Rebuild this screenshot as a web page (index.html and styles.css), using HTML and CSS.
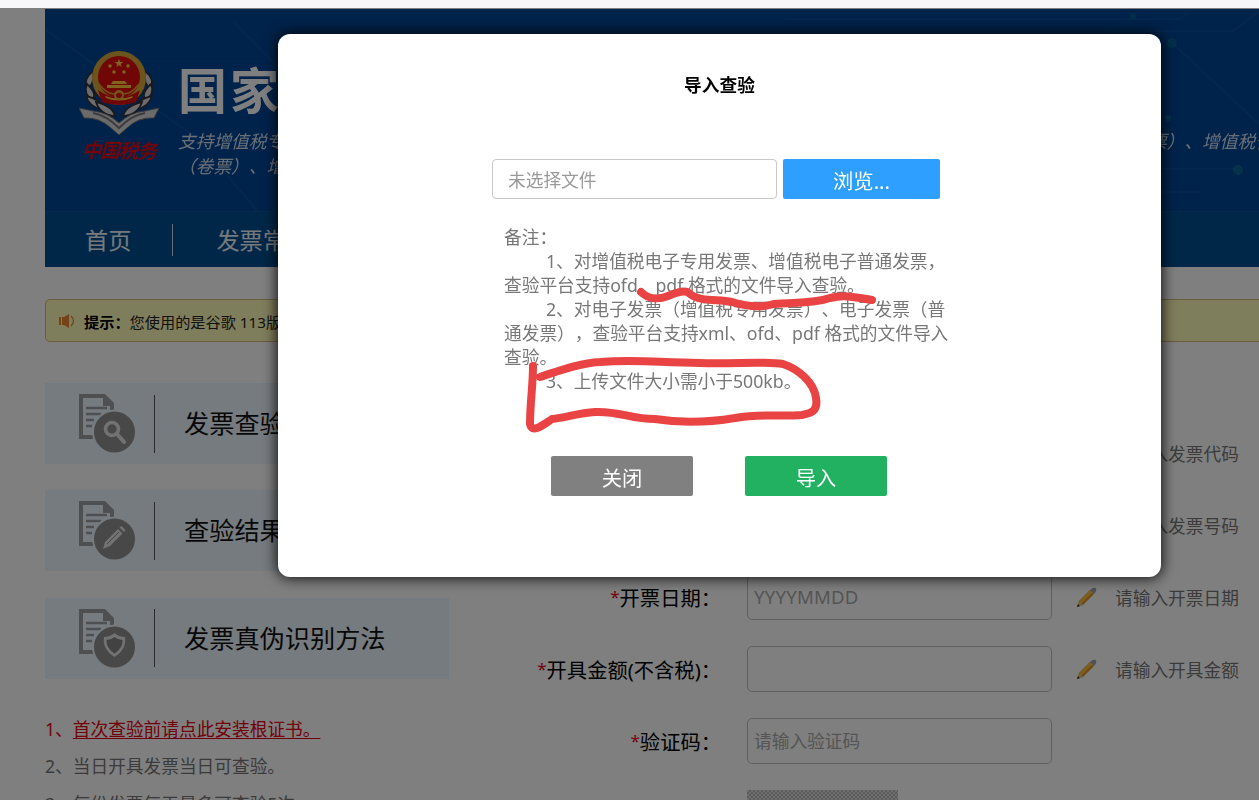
FILE: index.html
```html
<!DOCTYPE html>
<html lang="zh-CN">
<head>
<meta charset="UTF-8" />
<meta name="viewport" content="width=device-width, initial-scale=1.0" />
<title>国家税务总局全国增值税发票查验平台</title>
<link rel="stylesheet" href="styles.css">
</head>
<body>
<div class="topbar"></div>

<div class="page">
  <header class="header">
    <svg class="circuit" width="1214" height="258" viewBox="0 0 1214 258">
      <g fill="none" stroke="#1a5fae" stroke-width="2" opacity=".35">
        <path d="M0 20 L150 128 L215 205" />
        <path d="M35 52 H232" opacity=".5" />
        <path d="M188 12 L240 65" />
        <path d="M740 10 H1135 L1142 4" />
        <path d="M1060 22 H1188 L1214 2" />
        <path d="M1123 30 L1214 115" />
        <path d="M1115 160 H1190 M1115 183 H1155" />
      </g>
      <g fill="#158391">
        <circle cx="1127" cy="34" r="5" opacity=".4" />
        <circle cx="1193" cy="161" r="5" opacity=".5" />
        <circle cx="1123" cy="109" r="3" opacity=".5" />
        <circle cx="1088" cy="7" r="3" opacity=".4" />
      </g>
    </svg>
    <div class="banner">
      <div class="logo">
        <svg width="82" height="86" viewBox="0 0 82 86">
          <!-- 麦穗 -->
          <g fill="#d9d9dd" stroke="#33333b" stroke-width="1.8">
            <path d="M14 21 Q4 29 8 38 Q16 35 14 21Z" />
            <path d="M66 21 Q76 29 72 38 Q64 35 66 21Z" />
            <path d="M8 34 Q4 44 13 50 Q19 44 8 34Z" />
            <path d="M72 34 Q76 44 67 50 Q61 44 72 34Z" />
            <path d="M7 46 Q10 57 22 59 Q24 50 7 46Z" />
            <path d="M73 46 Q70 57 58 59 Q56 50 73 46Z" />
            <path d="M17 52 Q21 65 36 66 Q34 56 17 52Z" />
            <path d="M63 52 Q59 65 44 66 Q46 56 63 52Z" />
            <path d="M12 38 L27 54 M68 38 L53 54" />
          </g>
          <ellipse cx="40" cy="28" rx="27" ry="27" fill="#d8a83a" />
          <circle cx="40" cy="27" r="21" fill="#e00c0c" />
          <path d="M19 40 Q40 55 61 40 L57 52 Q40 58 23 52Z" fill="#e00c0c" />
          <g fill="#ffc83c">
            <path d="M40 9 l1.2 3 3.2 0 -2.6 2 1 3.1 -2.8-1.9 -2.8 1.9 1-3.1 -2.6-2 3.2 0Z" />
            <circle cx="31" cy="16" r="1.7" /><circle cx="49" cy="16" r="1.7" />
            <circle cx="35" cy="22" r="1.7" /><circle cx="45" cy="22" r="1.7" />
            <path d="M34 31 H46 L48 34 H32Z M28 35 H52 V38 H28Z" />
            <path d="M26 46 Q40 51 54 46 L53 48 Q40 53 27 48Z" />
          </g>
          <circle cx="40" cy="45" r="4" fill="none" stroke="#e5ac35" stroke-width="2" />
          <path d="M20 34 Q31 48 40 42 Q49 48 60 34" fill="none" stroke="#e0a530" stroke-width="1.5" />
          <!-- 绶带 -->
          <path d="M0 58 L14 61 Q28 62 40 73 Q52 62 66 61 L80 58 L75 68 Q59 67 48 78 L40 85 L32 78 Q20 67 5 68Z" fill="#d6d6d9" stroke="#717179" />
          <path d="M14 63 Q27 65 40 78 Q53 65 66 63" fill="none" stroke="#777780" stroke-width="2" />
        </svg>
        <div class="logo-text">中国税务</div>
      </div>
      <div class="intro">
        <h1>国家税务</h1>
        <div class="desc"><span class="desc-main">支持增值税专用发票</span><span>票）、增值税普</span></div>
        <div class="desc">（卷票）、增值税</div>
      </div>
    </div>
    <nav class="nav">
      <a>首页</a>
      <i></i>
      <a>发票常见问题</a>
    </nav>
  </header>

  <div class="tip">
    <svg width="18" height="16" viewBox="0 0 18 16" fill="#e8892c">
      <path d="M1 4 H3 V12 H1Z M4 4 H6 L11 1 V15 L6 12 H4Z" />
      <path d="M13 3 Q18 8 13 13" fill="none" stroke="#e8892c" stroke-width="1.3" />
    </svg>
    <b>提示：</b><span>您使用的是谷歌 113版本浏览器</span>
  </div>

  <div class="main">
    <div class="side">
      <div class="card">
        <svg class="card-icon" width="58" height="62" viewBox="0 0 58 62">
          <use href="#doc" />
          <circle cx="33" cy="38" r="6.500" fill="none" stroke="#e4e4e4" stroke-width="3.600" />
          <path d="M38 43 L45 51" stroke="#e4e4e4" stroke-width="4" stroke-linecap="round" />
        </svg>
        <i></i><span>发票查验说明</span>
      </div>
      <div class="card">
        <svg class="card-icon" width="58" height="62" viewBox="0 0 58 62">
          <use href="#doc" />
          <path d="M24 51 L26 44 L39 31 L43.500 35.500 L31 48Z M40.500 29.500 L42.500 28 L46.500 32 L45 34Z" fill="#e4e4e4" />
          <path d="M28 46 L40 34" stroke="#909090" />
        </svg>
        <i></i><span>查验结果说明</span>
      </div>
      <div class="card">
        <svg class="card-icon" width="58" height="62" viewBox="0 0 58 62">
          <use href="#doc" />
          <path d="M35.500 27 Q40 31 46 31 Q48 43 35.500 51 Q23 43 25 31 Q31 31 35.500 27Z" fill="#e4e4e4" />
          <path d="M35.500 31 Q39 34 43.500 34 Q44 42 35.500 47.500 Q27 42 27.500 34 Q32 34 35.500 31Z" fill="#858585" />
        </svg>
        <i></i><span>发票真伪识别方法</span>
      </div>

      <div class="notes">
        <div class="red">1、<a>首次查验前请点此安装根证书。</a></div>
        <div>2、当日开具发票当日可查验。</div>
        <div>3、每份发票每天最多可查验5次。</div>
      </div>
    </div>

    <div class="form">
      <div class="row"><label><em>*</em>发票代码：</label><div class="input"></div><svg class="pencil"><use href="#pencil" /></svg><span>请输入发票代码</span></div>
      <div class="row"><label><em>*</em>发票号码：</label><div class="input"></div><svg class="pencil"><use href="#pencil" /></svg><span>请输入发票号码</span></div>
      <div class="row"><label><em>*</em>开票日期：</label><div class="input date">YYYYMMDD</div><svg class="pencil"><use href="#pencil" /></svg><span>请输入开票日期</span></div>
      <div class="row"><label><em>*</em>开具金额(不含税)：</label><div class="input"></div><svg class="pencil"><use href="#pencil" /></svg><span>请输入开具金额</span></div>
      <div class="row"><label><em>*</em>验证码：</label><div class="input">请输入验证码</div></div>
      <div class="captcha"></div>
    </div>
  </div>
</div>

<!-- 导入查验弹窗 -->
<div class="mask">
  <div class="dialog">
    <h2>导入查验</h2>
    <div class="file">
      <div class="file-name">未选择文件</div>
      <div class="btn blue">浏览...</div>
    </div>
    <div class="remark">
      <div>备注：</div>
      <div class="indent">1、对增值税电子专用发票、增值税电子普通发票，</div>
      <div>查验平台支持ofd、pdf 格式的文件导入查验。</div>
      <div class="indent">2、对电子发票（增值税专用发票）、电子发票（普</div>
      <div>通发票），查验平台支持xml、ofd、pdf 格式的文件导入</div>
      <div>查验。</div>
      <div class="indent">3、上传文件大小需小于500kb。</div>
    </div>
    <div class="btns">
      <div class="btn gray">关闭</div>
      <div class="btn green">导入</div>
    </div>
    <svg class="marks" width="490" height="220" viewBox="480 220 490 220">
      <path d="M641 292 C648 299 658 300 668 296 C678 292 686 289 690 294 C700 302 718 299 732 302 C748 307 760 308 774 304 C795 302 812 304 830 298 C846 294 858 298 872 300" />
      <path d="M540 377 C556 372 578 363 600 362 C640 359 660 363 700 363 C735 364 765 361 783 364 C798 369 814 382 816 398 C818 410 813 413 802 415 C775 417 760 413 735 418 C705 423 680 423 655 419 C630 419 620 411 595 412 C578 413 565 418 552 419 C543 425 532 434 530 424 C530 404 533 385 533 366" />
    </svg>
  </div>
</div>

<svg width="0" height="0" class="defs">
  <g id="doc">
    <path d="M0 3 H26 L35 12 V24 H31 V15 H24 V7 H4 V44 H14 V48 H0Z" fill="#9a9ea2" />
    <path d="M7 17 H28 M7 23 H22 M7 29 H15 M7 35 H13" stroke="#9a9ea2" stroke-width="2.500" />
    <circle cx="35.500" cy="41" r="21.500" fill="#909090" stroke="#ecf6ff" stroke-width="2" />
  </g>
  <g id="pencil">
    <path d="M1 20 L3 14 L14 3 L18 7 L7 18Z" fill="#dd9420" />
    <path d="M3 14 L14 3 L16.500 5.500 L5.500 16.500Z" fill="#f5bd48" />
    <path d="M14 3 Q17 0 20 1 Q21 4 18 7Z" fill="#a9a3a6" />
    <path d="M1 20 L3 14 L7 18Z" fill="#e6c78f" />
    <path d="M1 20 L2 17 L4 19Z" fill="#333" />
  </g>
</svg>
</body>
</html>
```

FILE: styles.css
```css
body {
  margin: 0;
  height: 800px;
  overflow: hidden;
  position: relative;
  background: #fff;
  font-family: "Noto Sans", "Noto Sans CJK SC", sans-serif;
  font-size: 17.7px;
  white-space: nowrap;
  text-spacing-trim: space-all;
}
i, em {
  font-style: normal;
}
.topbar {
  height: 8px;
  background: #f7f6f8;
}
.page {
  height: 792px;
  padding: 1px 0 0 45px;
  box-sizing: border-box;
  overflow: hidden;
}

/* 头部 */
.header {
  height: 258px;
  position: relative;
  overflow: hidden;
  background: #004696;
  color: #fff;
}
.circuit {
  position: absolute;
  left: 0;
  top: 0;
}
.banner {
  position: relative;
  height: 202px;
  display: flex;
}
.logo {
  flex: none;
  width: 99px;
  padding: 41px 0 0 34px;
}
.logo svg {
  display: block;
}
.logo-text {
  color: #e30b12;
  font-family: "Noto Sans CJK SC", sans-serif;
  font-size: 19.5px;
  font-weight: bold;
  font-style: italic;
  line-height: 28px;
  letter-spacing: -1px;
  padding-left: 3px;
  transform: rotate(1deg);
}
.intro {
  flex: none;
  padding-top: 50px;
}
h1 {
  margin: 0 0 8px;
  font-size: 49px;
  line-height: 62px;
  letter-spacing: 3px;
}
.desc {
  display: flex;
  font-size: 17.7px;
  line-height: 24.5px;
  font-style: italic;
  color: #d5dfed;
}
.desc-main {
  width: 971px;
}
.nav {
  position: relative;
  height: 56px;
  box-sizing: border-box;
  border-top: 1px solid #0a5298;
  background: #004f90;
  display: flex;
  align-items: center;
  padding-left: 40px;
  font-size: 23.2px;
  line-height: 56px;
  color: #eef4fa;
}
.nav i {
  width: 1px;
  height: 32px;
  margin: 0 43px 0 41px;
  background: #cfdce9;
}

.tip {
  height: 43px;
  width: 1240px;
  box-sizing: border-box;
  margin-top: 32px;
  padding-left: 12px;
  border: 1px solid #d8b878;
  border-radius: 5px;
  background: #fffcb8;
  display: flex;
  align-items: center;
  font-size: 15.2px;
  color: #222;
}
.tip b {
  margin-left: 8px;
  color: #000;
}

.main {
  display: flex;
}
.side {
  width: 404px;
  padding-top: 41px;
}
.card {
  height: 81px;
  margin-bottom: 26.300px;
  background: #ecf6ff;
  display: flex;
  align-items: center;
  font-size: 25.2px;
  color: #111;
}
.card span {
  padding-bottom: 3px;
}
.card-icon {
  margin: 0 17px 3px 34px;
}
.card i {
  width: 1px;
  height: 58px;
  margin-right: 29px;
  background: #555;
}
.notes {
  margin-top: 32px;
  line-height: 37.5px;
  color: #777;
}
.notes .red {
  color: #e60012;
}
.notes a {
  text-decoration: underline;
  text-underline-offset: 2px;
}

/* 表单 */
.form {
  padding-top: 88px;
}
.row {
  display: flex;
  align-items: center;
  height: 46px;
  margin-bottom: 26px;
  color: #777;
}
.row label {
  width: 272px;
  text-align: right;
  font-size: 20.3px;
  color: #000;
}
.row em {
  color: #e60012;
  font-size: 17px;
  line-height: 1;
  vertical-align: 3px;
}
.input {
  width: 305px;
  height: 46px;
  box-sizing: border-box;
  margin-left: 26px;
  padding-left: 6px;
  border: 1px solid #c0c0c0;
  border-radius: 5px;
  line-height: 44px;
  color: #aaa;
}
.date {
  font-size: 18.6px;
  letter-spacing: .2px;
}
.pencil {
  width: 21px;
  height: 21px;
  margin: 0 18px 0 24px;
}
.captcha {
  width: 151px;
  height: 40px;
  margin-left: 298px;
  background: repeating-conic-gradient(#b8b8b8 0 25%, #dcdcdc 0 50%) 0 0 / 4px 4px;
}

/* 弹窗 */
.mask {
  display: flow-root;
  position: absolute;
  left: 0;
  top: 8px;
  right: 0;
  bottom: 0;
  background: rgba(0, 0, 0, .5);
}
.dialog {
  position: relative;
  width: 883px;
  height: 543px;
  box-sizing: border-box;
  margin: 26px 0 0 278px;
  padding-top: 36px;
  border-radius: 12px;
  background: #fff;
  box-shadow: 0 0 14px 1px rgba(0, 0, 0, .9);
}
h2 {
  margin: 0;
  text-align: center;
  font-size: 17.7px;
  line-height: 30px;
}
.file {
  display: flex;
  margin: 59px 0 0 214px;
}
.file-name {
  width: 285px;
  height: 40px;
  box-sizing: border-box;
  margin-right: 6px;
  padding-left: 15px;
  border: 1px solid #c8c8c8;
  border-radius: 4px;
  line-height: 40px;
  color: #999;
}
.btn {
  width: 142px;
  height: 40px;
  border-radius: 2px;
  font-size: 20.3px;
  line-height: 44px;
  text-align: center;
  color: #fff;
}
.blue {
  width: 157px;
  background: #2e9fff;
}
.gray {
  background: #808080;
}
.green {
  background: #22b161;
}
.remark {
  margin: 26px 0 0 226px;
  line-height: 24px;
  color: #777;
}
.indent {
  padding-left: 42px;
}
.btns {
  display: flex;
  gap: 52px;
  margin: 63px 0 0 273px;
}
.marks {
  position: absolute;
  left: 202px;
  top: 186px;
  fill: none;
  stroke: #e94343;
  stroke-width: 8;
  stroke-linecap: round;
  stroke-linejoin: round;
}
.defs {
  position: absolute;
}
```
